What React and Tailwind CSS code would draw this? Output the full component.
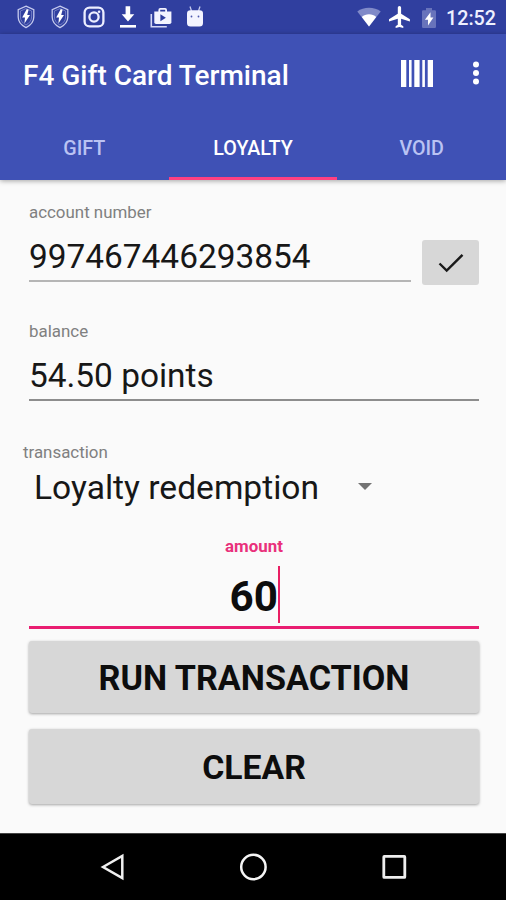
import React from 'react';
import clsx from 'clsx';

const ShieldIcon = () => (
  <svg className="w-[18px] h-6" viewBox="0 0 18 24" fill="none">
    <path d="M9 1.2 L16.8 4.6 V12 C16.8 16.8 13 20.6 9 22.6 C5 20.6 1.2 16.8 1.2 12 V4.6 Z" stroke="#c5caee" strokeWidth="1.3" />
    <path d="M9 3.6 L14.6 6 V12 C14.6 15.6 12 18.4 9 20 C6 18.4 3.4 15.6 3.4 12 V6 Z" stroke="#8c95d2" strokeWidth=".7" />
    <path d="M9.8 4 L5.2 12.4 H8 L7.4 18.6 L13 10 H10.2 L11.6 4.8 Z" fill="#fff" />
  </svg>
);

const InstagramIcon = () => (
  <svg className="w-[22px] h-[22px]" viewBox="0 0 22 22" fill="none" stroke="#eceeff" strokeWidth="2.3">
    <rect x="1.6" y="1.6" width="18.8" height="18.8" rx="5" />
    <circle cx="11" cy="11" r="4.6" />
    <circle cx="16.1" cy="5.8" r="1.3" fill="#eceeff" stroke="none" />
  </svg>
);

const DownloadIcon = () => (
  <svg className="w-[18px] h-6" viewBox="0 0 18 24" fill="#fff">
    <path d="M6.6 1.3h4.6v8h4.1L9 16.4 2.7 9.3h3.9z" />
    <path d="M1 20h16v2.6H1z" />
  </svg>
);

const ShopIcon = () => (
  <svg className="w-[22px] h-[22px]" viewBox="0 0 22 22">
    <path d="M1.3 7v12.700h15.500" fill="none" stroke="#d5d9f6" strokeWidth="1.6" />
    <path d="M9.300 5V2.900q0-1 1-1h4.800q1 0 1 1V5" fill="none" stroke="#f3f4ff" strokeWidth="1.8" />
    <path d="M4.300 4.500h17.100v10.800q0 1.800-1.800 1.800H6.100q-1.800 0-1.800-1.800z" fill="#f3f4ff" />
    <path d="M10.400 7.200v7l5.500-3.500z" fill="#303f9f" />
  </svg>
);

const DroidIcon = () => (
  <svg className="w-[18px] h-[22px]" viewBox="0 0 18 22" fill="#f3f4ff">
    <path d="M4 .5 5.500 5M14 .5 12.500 5" stroke="#c5caee" strokeWidth="1.300" />
    <path d="M1 7.500Q1 4.300 4.500 4.300h9Q17 4.300 17 7.500v9.500q0 3.500-3.500 3.500h-9Q1 20.500 1 17z" />
    <circle cx="5.500" cy="10.500" r=".9" fill="#4a57ac" />
    <circle cx="12.500" cy="10.500" r=".9" fill="#4a57ac" />
  </svg>
);

const WifiIcon = () => (
  <svg className="w-6 h-5" viewBox="0 0 24 20">
    <path d="M12 19.500.3 4.500C6.500-.4 17.500-.4 23.700 4.500z" fill="#808ac8" />
    <path d="M12 19.500 4.800 10C8.500 6.300 15.500 6.300 19.200 10z" fill="#fff" />
  </svg>
);

const PlaneIcon = () => (
  <svg className="w-[22px] h-[22px]" viewBox="2 2 20 20" fill="#fff">
    <path d="M21 16v-2l-8-5V3.500c0-.83-.67-1.500-1.500-1.500S10 2.670 10 3.500V9l-8 5v2l8-2.500V19l-2 1.500V22l3.500-1 3.500 1v-1.500L13 19v-5.500l8 2.500z" />
  </svg>
);

const BatteryIcon = () => (
  <svg className="w-[14px] h-5" viewBox="0 0 14 20">
    <path d="M4 0h6v2.200h2.800q1.200 0 1.200 1.200v15.400q0 1.200-1.200 1.200H1.200Q0 20 0 18.800V3.400q0-1.200 1.200-1.200H4z" fill="#6873bb" />
    <path d="M8.500 4.200 2.900 11.800H6v5.700L11.400 9.500H8.500z" fill="#fff" />
  </svg>
);

const BarcodeIcon = () => (
  <svg className="w-8 h-[27px]" viewBox="0 0 32 27" fill="#fff">
    <path d="M0 0h5.300v27H0zM8 0h2.600v27H8zM13.300 0h5.300v27h-5.300zM21.300 0h2.600v27h-2.600zM26.700 0H32v27h-5.300z" />
  </svg>
);

const MoreIcon = () => (
  <svg className="w-2 h-6" viewBox="0 0 8 24" fill="#fff">
    <circle cx="4" cy="3.500" r="3" />
    <circle cx="4" cy="12" r="3" />
    <circle cx="4" cy="20.500" r="3" />
  </svg>
);

function StatusBar() {
  return (
    <div className="flex h-[34px] items-center bg-[#303f9f] pl-[17px] pr-[10px]">
      <ShieldIcon />
      <div className="ml-4"><ShieldIcon /></div>
      <div className="ml-[14px]"><InstagramIcon /></div>
      <div className="ml-[14px]"><DownloadIcon /></div>
      <div className="ml-[13px] mt-px"><ShopIcon /></div>
      <div className="ml-[14px]"><DroidIcon /></div>
      <div className="ml-auto"><WifiIcon /></div>
      <div className="ml-2"><PlaneIcon /></div>
      <div className="ml-[11px] mt-px"><BatteryIcon /></div>
      <span className="ml-[10px] pt-[3px] text-[19.7px] font-medium leading-[34px] text-[#eef0ff]">12:52</span>
    </div>
  );
}

function Tab({ label, active }) {
  return (
    <div className={clsx(
      'flex-1 border-b-[3px] pt-2 text-center text-[19.7px] font-medium leading-[58px]',
      active ? 'border-[#ff4081] text-white' : 'border-transparent text-[#bac3f3]'
    )}>
      {label}
    </div>
  );
}

function Header() {
  return (
    <div className="h-[146px] bg-[#3f51b5] shadow-[0_1px_5px_rgba(0,0,0,0.35)]">
      <div className="flex h-[78px] items-center pl-[23px] pr-[26px]">
        <h1 className="flex-1 pt-[5px] text-[28px] font-medium text-white">F4 Gift Card Terminal</h1>
        <BarcodeIcon />
        <div className="ml-[39px]"><MoreIcon /></div>
      </div>
      <div className="flex h-[68px]">
        <Tab label="GIFT" />
        <Tab label="LOYALTY" active />
        <Tab label="VOID" />
      </div>
    </div>
  );
}

function Field({ label, value, lineClass }) {
  return (
    <div className={clsx('h-20 border-b-2', lineClass)}>
      <div className="h-5 text-[16.9px] leading-5 text-[#808080]">{label}</div>
      <div className="pt-[15px] text-[33.4px] leading-[40px] text-[#171717]">{value}</div>
    </div>
  );
}

function Button({ children, className }) {
  return (
    <button className={clsx(
      'block w-full rounded-[3px] bg-[#d7d7d7] font-bold text-[#0d0d0d] shadow-[0_1px_3px_rgba(0,0,0,0.35)]',
      className
    )}>
      {children}
    </button>
  );
}

export default function App() {
  return (
    <div className="flex h-[900px] w-[506px] flex-col overflow-hidden bg-[#fafafa] font-[Roboto,sans-serif]">
      <StatusBar />
      <Header />
      <main className="flex-1 pl-[29px] pr-[27px] pt-[22px]">
        <div className="flex h-[119px] items-start">
          <div className="w-[382px]">
            <Field label="account number" value="997467446293854" lineClass="border-[#b5b5b5]" />
          </div>
          <button className="ml-[11px] mt-[38px] flex h-[45px] w-[57px] items-center justify-center rounded-[3px] bg-[#d7d7d7]">
            <svg className="w-[26px] h-5" viewBox="0 0 26 20" fill="none" stroke="#1a1a1a" strokeWidth="2.400">
              <path d="M1.500 10.500 8.700 17.600 24.500 1.800" />
            </svg>
          </button>
        </div>
        <Field label="balance" value="54.50 points" lineClass="border-[#8d8d8d]" />
        <div className="-ml-[6px] mt-[41px] h-5 text-[16.9px] leading-5 text-[#808080]">transaction</div>
        <div className="flex h-[50px] items-center pl-[5px]">
          <span className="w-[324px] pt-[2px] text-[33.6px] leading-[50px] text-[#171717]">Loyalty redemption</span>
          <svg className="-mt-0.5 w-[14px] h-[7px]" viewBox="0 0 14 7" fill="#737373">
            <path d="M0 0h14L7 7z" />
          </svg>
        </div>
        <div className="mt-[24px] h-[93px] border-b-[3px] border-[#e91e71] text-center">
          <div className="h-5 text-[16.9px] font-bold leading-5 text-[#e9307b]">amount</div>
          <div className="mt-[10px] flex h-[57px] justify-center pl-[2px] text-[42.2px] font-bold leading-[62px] text-[#0d0d0d]">
            <span>60</span>
            <span className="h-[57px] w-[2.5px] bg-[#e91e63]" />
          </div>
        </div>
        <Button className="mt-3 h-[72px] pt-[3px] text-[34.2px]">RUN TRANSACTION</Button>
        <Button className="mt-4 h-[75px] pt-[3px] text-[33.75px]">CLEAR</Button>
      </main>
      <nav className="flex h-[67px] items-center justify-center gap-[115px] border-t border-[#444] bg-black">
        <svg className="w-[26px] h-7" viewBox="0 0 26 28" fill="none" stroke="#f0f0f0" strokeWidth="2.500">
          <path d="M5 14 24.300 2.800v22.400z" />
        </svg>
        <svg className="w-7 h-7" viewBox="0 0 28 28" fill="none" stroke="#f5f5f5" strokeWidth="2.500">
          <circle cx="14.400" cy="14" r="12.200" />
        </svg>
        <svg className="w-[26px] h-7" viewBox="0 0 26 28" fill="none" stroke="#eee" strokeWidth="2.800">
          <rect x="1.800" y="3.400" width="21" height="21" rx=".5" />
        </svg>
      </nav>
    </div>
  );
}
